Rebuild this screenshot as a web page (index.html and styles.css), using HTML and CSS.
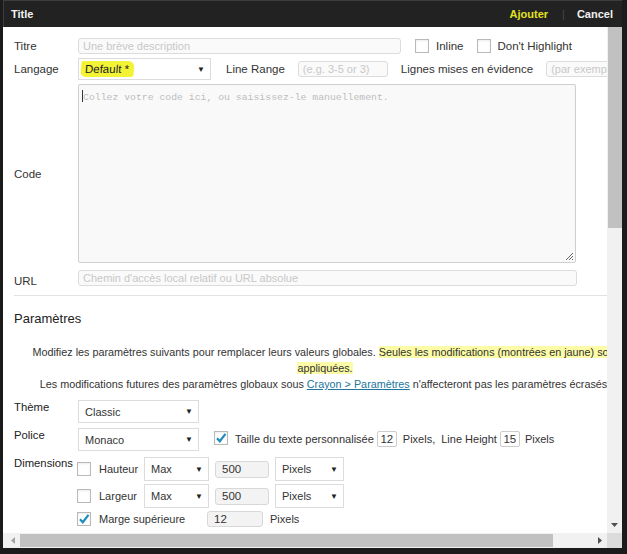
FILE: index.html
```html
<!DOCTYPE html>
<html lang="fr">
<head>
<meta charset="utf-8">
<title>Crayon</title>
<link rel="stylesheet" href="styles.css">
</head>
<body>
<div class="window">
  <div class="titlebar">
    <span class="tb-title">Title</span>
    <span class="tb-actions">
      <span class="tb-add">Ajouter</span>
      <span class="tb-sep">|</span>
      <span class="tb-cancel">Cancel</span>
    </span>
  </div>
  <div class="main">
    <div class="content">
      <div class="row row-titre">
        <span class="label">Titre</span>
        <span class="input w-titre ph">Une brève description</span>
        <span class="check ml14"></span><span class="ctext">Inline</span>
        <span class="check ml13"></span><span class="ctext">Don't Highlight</span>
      </div>
      <div class="row row-lang">
        <span class="label">Langage</span>
        <span class="select w-lang"><span class="hl-marker">Default *</span><span class="arrow">▼</span></span>
        <span class="text ml15">Line Range</span>
        <span class="input w-range ph ml13">(e.g. 3-5 or 3)</span>
        <span class="text ml13">Lignes mises en évidence</span>
        <span class="input w-mark ph ml13">(par exemple 1,2,3-5)</span>
      </div>
      <div class="row row-code">
        <span class="label">Code</span>
        <div class="textarea">
          <span class="caret"></span><span class="mono-ph">Collez votre code ici, ou saisissez-le manuellement.</span>
          <svg class="grip" width="9" height="9" viewBox="0 0 9 9"><path d="M8 1 L1 8 M8 4 L4 8 M8 7 L7 8" stroke="#666" stroke-width="1"/></svg>
        </div>
      </div>
      <div class="row row-url">
        <span class="label label-url">URL</span>
        <span class="input w-url ph">Chemin d'accès local relatif ou URL absolue</span>
      </div>
      <div class="divider"></div>
      <h2 class="heading">Paramètres</h2>
      <p class="intro">Modifiez les paramètres suivants pour remplacer leurs valeurs globales. <span class="hl">Seules les modifications (montrées en jaune) sont appliquées.</span><br>Les modifications futures des paramètres globaux sous <a class="link">Crayon &gt; Paramètres</a> n'affecteront pas les paramètres écrasés.</p>

      <div class="prow prow-theme">
        <span class="plabel">Thème</span>
        <span class="select w-theme"><span>Classic</span><span class="arrow">▼</span></span>
      </div>
      <div class="prow prow-police">
        <span class="plabel">Police</span>
        <span class="select w-theme"><span>Monaco</span><span class="arrow">▼</span></span>
        <span class="check checked ml15"><svg width="12" height="12" viewBox="0 0 12 12"><path d="M2 6.2 L4.8 9.2 L10.5 1.8" fill="none" stroke="#1e8cbe" stroke-width="2.2"/></svg></span>
        <span class="ctext">Taille du texte personnalisée</span>
        <span class="small-in">12</span>
        <span class="text ml6">Pixels,</span>
        <span class="text ml6">Line Height</span>
        <span class="small-in">15</span>
        <span class="text ml5">Pixels</span>
      </div>
      <div class="prow prow-dim">
        <span class="plabel dim-label">Dimensions</span>
        <div class="dims">
          <div class="drow">
            <span class="check"></span><span class="dtext">Hauteur</span>
            <span class="select w-max"><span>Max</span><span class="arrow">▼</span></span>
            <span class="num w-num">500</span>
            <span class="select w-px"><span>Pixels</span><span class="arrow">▼</span></span>
          </div>
          <div class="drow">
            <span class="check"></span><span class="dtext">Largeur</span>
            <span class="select w-max"><span>Max</span><span class="arrow">▼</span></span>
            <span class="num w-num">500</span>
            <span class="select w-px"><span>Pixels</span><span class="arrow">▼</span></span>
          </div>
          <div class="drow drow-small">
            <span class="check checked"><svg width="12" height="12" viewBox="0 0 12 12"><path d="M2 6.2 L4.8 9.2 L10.5 1.8" fill="none" stroke="#1e8cbe" stroke-width="2.2"/></svg></span>
            <span class="dtext dtext-wide">Marge supérieure</span>
            <span class="num w-num2">12</span>
            <span class="text ml7">Pixels</span>
          </div>
          <div class="drow drow-small">
            <span class="check"></span><span class="dtext dtext-wide">Marge inférieure</span>
            <span class="num w-num2">12</span>
            <span class="text ml7">Pixels</span>
          </div>
        </div>
      </div>
    </div>
    <div class="vscroll">
      <div class="vthumb"></div>
      <div class="vtrack"></div>
      <svg class="sarrow" width="15" height="12" viewBox="0 0 15 12"><path d="M4 4 L11 4 L7.5 8 Z" fill="#505050"/></svg>
    </div>
  </div>
  <div class="hrow">
    <div class="hscroll">
      <svg width="14" height="15" viewBox="0 0 14 15"><path d="M9 4 L9 11 L5 7.5 Z" fill="#a3a3a3"/></svg>
      <div class="hthumb"></div>
      <div class="htrack"></div>
      <svg width="14" height="15" viewBox="0 0 14 15"><path d="M5 4 L5 11 L9 7.5 Z" fill="#505050"/></svg>
    </div>
    <div class="corner"></div>
  </div>
</div>
</body>
</html>
```

FILE: styles.css
```css
* { box-sizing: border-box; }
html, body { margin: 0; padding: 0; }
body {
  background: #1b1b1b;
  font-family: "Liberation Sans", Arial, sans-serif;
  font-size: 11.5px;
  color: #333;
  width: 627px;
  height: 554px;
  overflow: hidden;
}
.window {
  margin-left: 3px;
  width: 619px;
  height: 549px;
  display: flex;
  flex-direction: column;
}
.titlebar {
  height: 27px;
  flex: none;
  background: #222;
  border-top: 1px solid #3d3d3d;
  border-left: 1px solid #3d3d3d;
  display: flex;
  align-items: center;
  justify-content: space-between;
  padding: 0 9px 0 7px;
  font-weight: bold;
  font-size: 11px;
}
.tb-title { color: #f2f2f2; }
.tb-actions { display: flex; align-items: center; }
.tb-add { color: #e3e31e; }
.tb-sep { color: #4a4a4a; margin: 0 12px 0 14px; font-weight: normal; }
.tb-cancel { color: #f0f0f0; }

.main { display: flex; height: 506px; flex: none; }
.content {
  width: 604px;
  flex: none;
  background: #fff;
  overflow: hidden;
  padding: 11px 0 0 11px;
}
.row { display: flex; align-items: center; white-space: nowrap; }
.label { width: 64px; flex: none; }
.row-titre { height: 16px; margin-bottom: 4px; }
.row-lang { height: 22px; margin-bottom: 4px; }
.row-code { height: 179px; margin-bottom: 7px; }
.row-url { height: 16px; }
.label-url { padding-top: 6px; }

.input {
  display: inline-flex;
  align-items: center;
  height: 16px;
  border: 1px solid #dcdcdc;
  border-radius: 3px;
  background: #fafafa;
  padding: 0 4px;
  flex: none;
  overflow: hidden;
  white-space: nowrap;
}
.ph { color: #c8c8c8; font-size: 11px; }
.w-titre { width: 323px; }
.w-range { width: 90px; }
.w-mark { width: 110px; }
.w-url { width: 499px; }

.check {
  width: 14px;
  height: 14px;
  flex: none;
  border: 1px solid #b9b9b9;
  background: #fff;
  box-shadow: inset 0 1px 2px rgba(0,0,0,0.08);
  display: inline-flex;
  align-items: center;
  justify-content: center;
}
.ctext { margin-left: 7px; }
.ml5 { margin-left: 5px; }
.ml6 { margin-left: 6px; }
.ml7 { margin-left: 7px; }
.ml13 { margin-left: 13px; }
.ml14 { margin-left: 14px; }
.ml15 { margin-left: 15px; }

.select {
  display: inline-flex;
  align-items: center;
  justify-content: space-between;
  border: 1px solid #dcdcdc;
  background: #fff;
  padding: 0 5px 0 6px;
  flex: none;
}
.arrow { font-size: 8px; color: #222; }
.w-lang { width: 133px; height: 22px; padding-left: 2px; }
.hl-marker {
  background: #f3f335;
  padding: 2px 5px 2px 4px;
  border-radius: 2px 6px 3px 5px;
  transform: skewX(-4deg);
  color: #222;
}

.textarea {
  position: relative;
  width: 498px;
  height: 179px;
  border: 1px solid #cfcfcf;
  border-radius: 2px;
  background: #f9f9f9;
  padding: 5px 0 0 3px;
  align-self: flex-start;
  white-space: nowrap;
}
.caret {
  display: inline-block;
  width: 1px;
  height: 12px;
  background: #333;
  vertical-align: -2px;
}
.mono-ph {
  font-family: "Liberation Mono", "Courier New", monospace;
  font-size: 9.8px;
  color: #bdbdbd;
}
.grip { position: absolute; right: 1px; bottom: 1px; }

.divider {
  height: 1px;
  background: #e2e2e2;
  margin: 9px 0 0 0;
}
.heading {
  font-size: 13px;
  font-weight: normal;
  color: #222;
  line-height: 16px;
  margin: 15px 0 0 0;
}
.intro {
  width: 622px;
  margin: 17px 0 0 0;
  text-align: center;
  font-size: 10.8px;
  line-height: 16px;
  color: #333;
  white-space: normal;
}
.hl { background: #fcfca6; }
.link { color: #21759b; text-decoration: underline; }

.prow { display: flex; align-items: flex-start; white-space: nowrap; margin-top: 5px; font-size: 11px; }
.plabel { width: 64px; flex: none; line-height: 14px; color: #222; font-size: 11.3px; }
.prow-theme { margin-top: 8px; }
.w-theme { width: 121px; height: 23px; }
.prow-police > .check { margin-top: 3px; }
.prow-police > .ctext, .prow-police > .text { line-height: 22px; }
.small-in {
  display: inline-flex;
  align-items: center;
  justify-content: center;
  width: 20px;
  height: 16px;
  margin-top: 3px;
  margin-left: 3px;
  border: 1px solid #ccc;
  border-radius: 2px;
  background: #fff;
  font-size: 11.5px;
}
.prow-dim { margin-top: 6px; }
.dim-label { width: 63px; margin-top: -1px; }
.dims { display: flex; flex-direction: column; gap: 3px; }
.drow { display: flex; align-items: center; height: 24px; }
.drow-small { height: 17px; margin-top: -1px; }
.drow-small + .drow-small { margin-top: 4px; }
.dtext { width: 53px; padding-left: 8px; flex: none; }
.dtext-wide { width: 116px; }
.w-max { width: 65px; height: 24px; }
.w-px { width: 69px; height: 24px; margin-left: 6px; }
.num {
  display: inline-flex;
  align-items: center;
  height: 17px;
  border: 1px solid #d8d8d8;
  border-radius: 3px;
  background: #f3f3f3;
  padding: 0 6px;
  flex: none;
  font-size: 11.5px;
}
.w-num { width: 54px; margin-left: 6px; }
.w-num2 { width: 56px; height: 16px; }
.text { flex: none; }

.vscroll {
  width: 15px;
  flex: none;
  background: #f1f1f1;
  display: flex;
  flex-direction: column;
}
.vthumb { height: 201px; margin: 0 0 0 1px; background: #c1c1c1; flex: none; }
.vtrack { flex: 1; }
.sarrow { flex: none; margin-bottom: 2px; }

.hrow { display: flex; height: 15px; flex: none; }
.hscroll {
  width: 604px;
  flex: none;
  background: #f1f1f1;
  display: flex;
  align-items: stretch;
  padding: 0 0 0 3px;
}
.hscroll svg { flex: none; }
.hthumb { width: 533px; margin: 1px 0 1px 0; background: #c1c1c1; flex: none; }
.htrack { flex: 1; }
.corner { width: 15px; background: #dcdcdc; }
```
